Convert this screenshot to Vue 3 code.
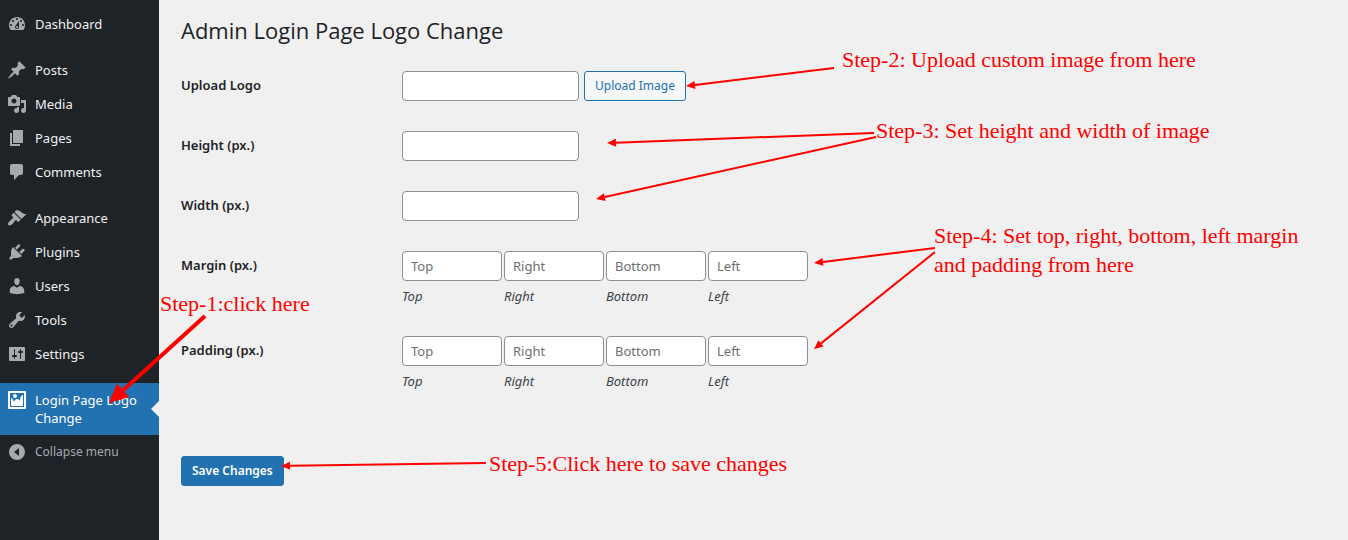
<script setup>
import { ref } from 'vue'

const groups = [
  [
    {
      name: 'Dashboard',
      icon: 'M3.76 16h12.48c1.1-1.37 1.76-3.11 1.76-5 0-4.42-3.58-8-8-8s-8 3.58-8 8c0 1.89.66 3.63 1.76 5zM10 4c.55 0 1 .45 1 1s-.45 1-1 1-1-.45-1-1 .45-1 1-1zM6 6c.55 0 1 .45 1 1s-.45 1-1 1-1-.45-1-1 .45-1 1-1zm8 0c.55 0 1 .45 1 1s-.45 1-1 1-1-.45-1-1 .45-1 1-1zm-5.37 5.55L12 7v6c0 1.1-.9 2-2 2s-2-.9-2-2c0-.57.24-1.08.63-1.45zM4 10c.55 0 1 .45 1 1s-.45 1-1 1-1-.45-1-1 .45-1 1-1zm12 0c.55 0 1 .45 1 1s-.45 1-1 1-1-.45-1-1 .45-1 1-1zm-5 3c0-.55-.45-1-1-1s-1 .45-1 1 .45 1 1 1 1-.45 1-1z',
    },
  ],
  [
    {
      name: 'Posts',
      icon: 'M10.44 3.02l1.82-1.82 6.36 6.35-1.83 1.82c-1.05-.68-2.48-.57-3.41.36l-.75.75c-.92.93-1.04 2.35-.35 3.41l-1.83 1.82-2.41-2.41-2.8 2.79c-.42.42-3.38 2.71-3.8 2.29s1.86-3.39 2.28-3.81l2.79-2.79L4.1 9.36l1.83-1.82c1.05.69 2.48.57 3.4-.36l.75-.75c.93-.92 1.05-2.35.36-3.41z',
    },
    {
      name: 'Media',
      icon: 'M13 11V4c0-.55-.45-1-1-1h-1.67L9 1H5L3.67 3H2c-.55 0-1 .45-1 1v7c0 .55.45 1 1 1h10c.55 0 1-.45 1-1zM7 4.5c1.38 0 2.5 1.12 2.5 2.5S8.38 9.5 7 9.5 4.5 8.38 4.5 7 5.62 4.5 7 4.5zM14 6h5v10.5c0 1.38-1.12 2.5-2.5 2.5S14 17.88 14 16.5s1.12-2.5 2.5-2.5c.17 0 .34.02.5.05V9h-3V6zm-4 8.05V13h2v3.5c0 1.38-1.12 2.5-2.5 2.5S7 17.88 7 16.5 8.12 14 9.5 14c.17 0 .34.02.5.05z',
    },
    { name: 'Pages', icon: 'M6 15V2h10v13H6zm-1 1h8v2H3V5h2v11z' },
    {
      name: 'Comments',
      icon: 'M5 2h9c1.1 0 2 .9 2 2v7c0 1.1-.9 2-2 2h-2l-5 5v-5H5c-1.1 0-2-.9-2-2V4c0-1.1.9-2 2-2z',
    },
  ],
  [
    {
      name: 'Appearance',
      icon: 'M14.48 11.06L7.41 3.99l1.5-1.5c.5-.56 2.3-.47 3.51.32 1.21.8 1.43 1.28 2.91 2.1 1.18.64 2.45 1.26 4.45.85zm-.71.71L6.7 4.7 4.93 6.47c-.39.39-.39 1.02 0 1.41l1.06 1.06c.39.39.39 1.03 0 1.42-.6.6-1.43 1.11-2.21 1.69-.35.26-.7.53-1.01.84C1.43 14.23.4 16.08 1.4 17.07c.99 1 2.84-.03 4.18-1.36.31-.31.58-.66.85-1.02.57-.78 1.08-1.61 1.69-2.21.39-.39 1.02-.39 1.41 0l1.06 1.06c.39.39 1.02.39 1.41 0z',
    },
    {
      name: 'Plugins',
      icon: 'M13.11 4.36L9.87 7.6 8 5.73l3.24-3.24c.35-.34 1.05-.2 1.56.32.52.51.66 1.21.31 1.55zm-8 1.77l.91-1.12 9.01 9.01-1.19.84c-.71.71-2.63 1.16-3.82 1.16H6.14L4.9 17.26c-.59.59-1.54.59-2.12 0-.59-.58-.59-1.53 0-2.12l1.24-1.24v-3.88c0-1.13.4-3.19 1.09-3.89zm7.26 3.97l3.24-3.24c.34-.35 1.04-.21 1.55.31.52.51.66 1.21.31 1.55l-3.24 3.25z',
    },
    {
      name: 'Users',
      icon: 'M10 9.25c-2.27 0-2.73-3.44-2.73-3.44C7 4.02 7.82 2 9.97 2c2.16 0 2.98 2.02 2.71 3.81 0 0-.41 3.44-2.68 3.44zm0 2.57L12.72 10c2.39 0 4.52 2.33 4.52 4.53v2.49s-3.65 1.13-7.24 1.13c-3.65 0-7.24-1.13-7.24-1.13v-2.49c0-2.25 1.94-4.48 4.47-4.48z',
    },
    {
      name: 'Tools',
      icon: 'M16.68 9.77c-1.34 1.34-3.3 1.67-4.95.99l-5.41 6.52c-.99.99-2.59.99-3.58 0s-.99-2.59 0-3.57l6.52-5.42c-.68-1.65-.35-3.61.99-4.95 1.28-1.28 3.12-1.62 4.72-1.06l-2.89 2.89 2.82 2.82 2.86-2.87c.53 1.58.18 3.39-1.08 4.65zM3.81 16.21c.4.39 1.04.39 1.43 0 .4-.4.4-1.04 0-1.43-.39-.4-1.03-.4-1.43 0-.39.39-.39 1.03 0 1.43z',
    },
    {
      name: 'Settings',
      icon: 'M18 16V4c0-.55-.45-1-1-1H3c-.55 0-1 .45-1 1v12c0 .55.45 1 1 1h14c.55 0 1-.45 1-1zM8 11h1c.55 0 1 .45 1 1s-.45 1-1 1H8v1.5c0 .28-.22.5-.5.5s-.5-.22-.5-.5V13H6c-.55 0-1-.45-1-1s.45-1 1-1h1V5.5c0-.28.22-.5.5-.5s.5.22.5.5V11zm5-2h-1c-.55 0-1-.45-1-1s.45-1 1-1h1V5.5c0-.28.22-.5.5-.5s.5.22.5.5V7h1c.55 0 1 .45 1 1s-.45 1-1 1h-1v5.5c0 .28-.22.5-.5.5s-.5-.22-.5-.5V9z',
    },
  ],
  [
    {
      name: 'Login Page Logo Change',
      current: true,
      icon: 'M2.25 1h15.5c.69 0 1.25.56 1.25 1.25v15.5c0 .69-.56 1.25-1.25 1.25H2.25C1.56 19 1 18.44 1 17.75V2.25C1 1.56 1.56 1 2.25 1zM17 17V3H3v14h14zM10 6c0-1.1-.9-2-2-2s-2 .9-2 2 .9 2 2 2 2-.9 2-2zm3 5s0-6 3-6v10c0 .55-.45 1-1 1H5c-.55 0-1-.45-1-1V8c2 0 3 4 3 4s1-3 3-3 3 2 3 2z',
    },
  ],
]

const sides = ['Top', 'Right', 'Bottom', 'Left']
const logo = ref('')
const height = ref('')
const width = ref('')
const boxes = ref({
  Margin: { Top: '', Right: '', Bottom: '', Left: '' },
  Padding: { Top: '', Right: '', Bottom: '', Left: '' },
})

const notes = [
  { id: 'n1', text: 'Step-1:click here', x: 160, y: 289 },
  { id: 'n2', text: 'Step-2: Upload custom image from here', x: 842, y: 45 },
  { id: 'n3', text: 'Step-3: Set height and width of image', x: 876, y: 116 },
  { id: 'n4', text: 'Step-4: Set top, right, bottom, left margin\nand padding from here', x: 934, y: 221 },
  { id: 'n5', text: 'Step-5:Click here to save changes', x: 489, y: 449 },
]

// from, to, stroke width, head length, half of the head's width
const arrows = [
  [205, 316, 109, 403, 4, 19, 9],
  [834, 68, 686, 86, 2, 9, 4],
  [874, 133, 607, 143, 2, 9, 4],
  [876, 137, 596, 199, 2, 9, 4],
  [935, 248, 814, 263, 2, 9, 4],
  [935, 252, 814, 349, 2, 9, 4],
  [486, 463, 281, 466, 2, 9, 4],
].map(([x1, y1, x2, y2, stroke, len, half]) => {
  const d = Math.hypot(x2 - x1, y2 - y1)
  const ux = (x2 - x1) / d
  const uy = (y2 - y1) / d
  const bx = x2 - ux * len
  const by = y2 - uy * len
  return {
    x1, y1, bx, by, stroke,
    head: `${x2},${y2} ${bx - uy * half},${by + ux * half} ${bx + uy * half},${by - ux * half}`,
  }
})
</script>

<template>
  <div class="admin">
    <nav class="menu" aria-label="Main menu">
      <ul v-for="(group, i) in groups" :key="i" class="group">
        <li v-for="item in group" :key="item.name">
          <a href="#" class="item" :class="{ current: item.current }">
            <svg class="icon" viewBox="0 0 20 20" aria-hidden="true">
              <path :d="item.icon" fill-rule="evenodd" />
            </svg>
            <span>{{ item.name }}</span>
          </a>
        </li>
      </ul>
      <button type="button" class="item collapse">
        <svg class="icon" viewBox="0 0 20 20" aria-hidden="true">
          <path fill-rule="evenodd" d="M10 2a8 8 0 1 1 0 16a8 8 0 0 1 0-16zM12 6v8l-5-4z" />
        </svg>
        <span>Collapse menu</span>
      </button>
    </nav>

    <main class="content">
      <h1>Admin Login Page Logo Change</h1>
      <form @submit.prevent>
        <div class="row">
          <label for="logo">Upload Logo</label>
          <div class="field">
            <input id="logo" v-model="logo" type="text" class="regular" />
            <button type="button" class="btn">Upload Image</button>
          </div>
        </div>
        <div class="row">
          <label for="height">Height (px.)</label>
          <div class="field">
            <input id="height" v-model="height" type="text" class="regular" />
          </div>
        </div>
        <div class="row">
          <label for="width">Width (px.)</label>
          <div class="field">
            <input id="width" v-model="width" type="text" class="regular" />
          </div>
        </div>
        <div v-for="(values, name) in boxes" :key="name" class="row" role="group" :aria-labelledby="name">
          <span :id="name" class="label">{{ name }} (px.)</span>
          <div class="sides">
            <div v-for="side in sides" :key="side" class="side">
              <input :id="name + side" v-model="values[side]" type="text" :placeholder="side" />
              <label :for="name + side">{{ side }}</label>
            </div>
          </div>
        </div>
        <button type="submit" class="btn primary">Save Changes</button>
      </form>
    </main>

    <div class="guide">
      <svg class="arrows" aria-hidden="true">
        <g v-for="(a, i) in arrows" :key="i">
          <line :x1="a.x1" :y1="a.y1" :x2="a.bx" :y2="a.by" :stroke-width="a.stroke" />
          <polygon :points="a.head" />
        </g>
      </svg>
      <p
        v-for="n in notes"
        :key="n.id"
        class="note"
        :style="{ left: n.x + 'px', top: n.y + 'px' }"
      >{{ n.text }}</p>
    </div>
  </div>
</template>

<style>
body {
  margin: 0;
  background: #f0f0f0;
}
</style>

<style scoped>
* {
  box-sizing: border-box;
}
.admin {
  position: relative;
  display: flex;
  min-height: 100vh;
  font: 13px/18px "Noto Sans", "Open Sans", sans-serif;
  color: #1d2327;
}
.menu {
  flex: none;
  width: 159px;
  padding-top: 7px;
  background: #1d2327;
}
.group {
  list-style: none;
  margin: 0 0 12px;
  padding: 0;
}
.group:last-of-type {
  margin-bottom: 0;
}
.item {
  position: relative;
  display: flex;
  align-items: flex-start;
  gap: 8px;
  width: 100%;
  padding: 8px 12px 8px 7px;
  color: #f0f0f1;
  text-decoration: none;
}
.icon {
  flex: none;
  width: 20px;
  height: 20px;
  margin: -1px 0;
  fill: #a7aaad;
}
.current {
  background: #2271b1;
  color: #fff;
}
.current .icon {
  fill: #fff;
}
.current::after {
  content: "";
  position: absolute;
  right: 0;
  top: 50%;
  margin-top: -8px;
  border: 8px solid transparent;
  border-left-width: 0;
  border-right-color: #f0f0f0;
}
.collapse {
  border: 0;
  background: none;
  color: #a7aaad;
  font: 12px/18px "Noto Sans", "Open Sans", sans-serif;
  text-align: left;
}
.content {
  flex: 1;
  padding: 15px 22px;
}
h1 {
  margin: 0 0 26px;
  font: 400 22px/30px "Open Sans", "Noto Sans", sans-serif;
}
.row {
  display: flex;
  margin-bottom: 30px;
}
.row > label,
.label {
  flex: none;
  width: 221px;
  padding: 5px 0 7px;
  font-weight: 600;
}
.field {
  display: flex;
  gap: 5px;
}
input {
  height: 30px;
  padding: 0 8px;
  border: 1px solid #8c8f94;
  border-radius: 4px;
  background: #fff;
  color: #2c3338;
  font: inherit;
}
input::placeholder {
  color: #6c6f74;
  opacity: 1;
}
.regular {
  width: 177px;
}
.sides {
  display: flex;
  gap: 2px;
}
.side {
  display: flex;
  flex-direction: column;
  gap: 6px;
  padding-bottom: 1px;
}
.side input {
  width: 100px;
}
.side label {
  font-style: italic;
  color: #3c434a;
}
.btn {
  height: 30px;
  padding: 0 10px;
  border: 1px solid #2271b1;
  border-radius: 3px;
  background: #f6f7f7;
  color: #2271b1;
  font: 12px/18px "Noto Sans", "Open Sans", sans-serif;
  white-space: nowrap;
}
.primary {
  margin-top: 35px;
  background: #2271b1;
  color: #fff;
  font-weight: 600;
}
.guide {
  position: absolute;
  inset: 0;
  overflow: hidden;
  pointer-events: none;
}
.arrows {
  position: absolute;
  width: 100%;
  height: 100%;
  fill: #f00;
  stroke: none;
}
.arrows line {
  stroke: #f00;
}
.note {
  position: absolute;
  margin: 0;
  font: 22px/29px "Liberation Serif", serif;
  color: #f00;
  white-space: pre;
}
</style>
